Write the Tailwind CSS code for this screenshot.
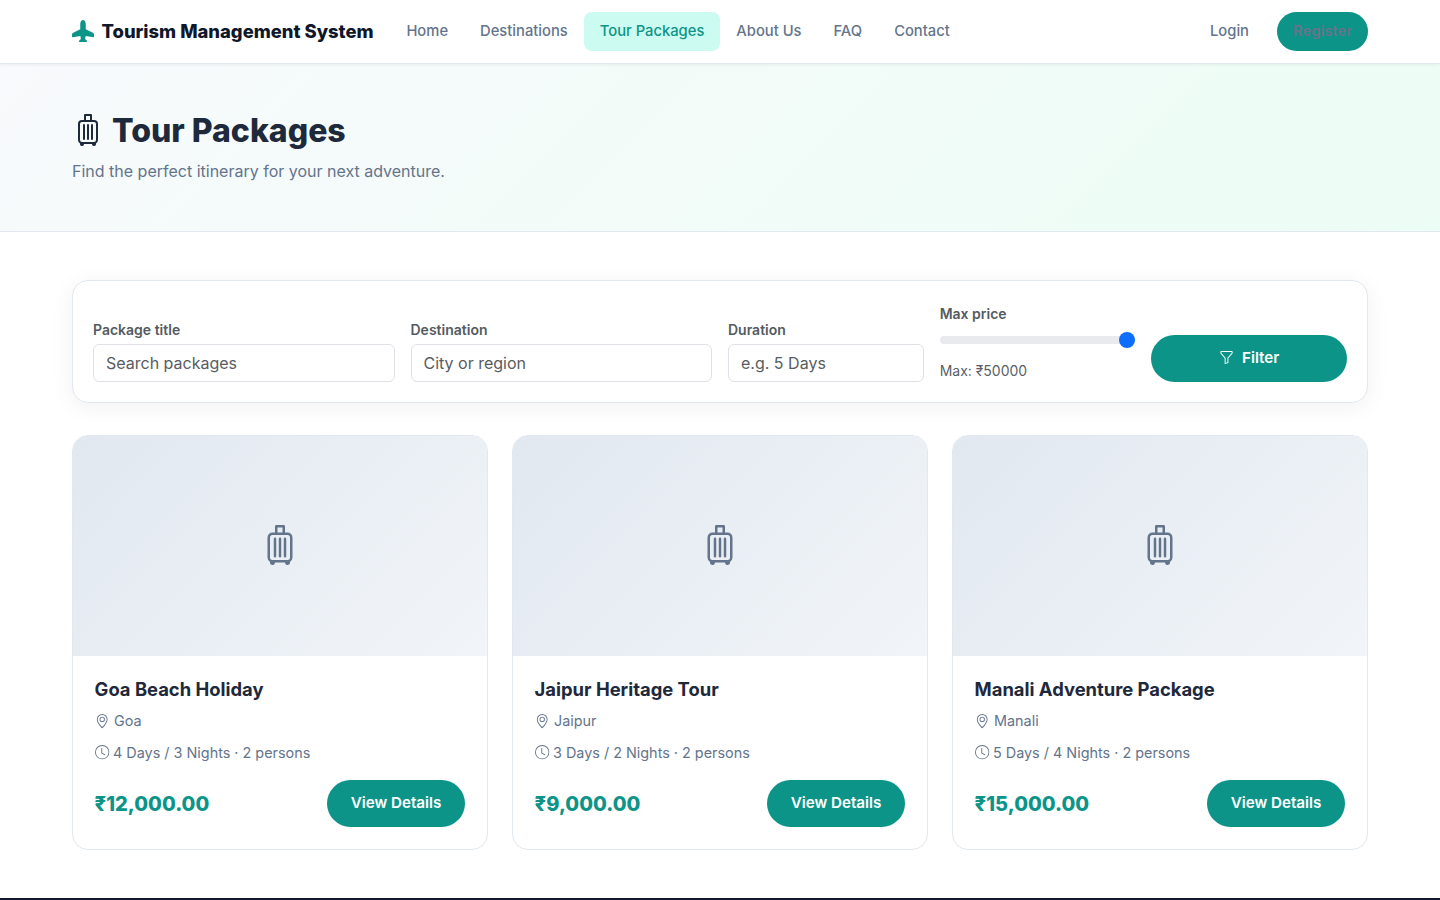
<!DOCTYPE html>
<html lang="en">
<head>
<meta charset="utf-8">
<title>Tour Packages - Tourism Management System</title>
<script src="https://cdn.jsdelivr.net/npm/@tailwindcss/browser@4"></script>
</head>
<body class="h-[900px] overflow-hidden bg-white font-['Inter',sans-serif] text-[#1e293b]">
<svg class="hidden">
  <symbol id="plane" viewBox="0 0 16 16"><path d="M6.428 1.151C6.708.591 7.213 0 8 0s1.292.592 1.572 1.151C9.861 1.73 10 2.431 10 3v3.691l5.17 2.585a1.5 1.5 0 0 1 .83 1.342V12a.5.5 0 0 1-.582.493l-5.507-.918-.375 2.253 1.318 1.318A.5.5 0 0 1 10.5 16h-5a.5.5 0 0 1-.354-.854l1.319-1.318-.376-2.253-5.507.918A.5.5 0 0 1 0 12v-1.382a1.5 1.5 0 0 1 .83-1.342L6 6.691V3c0-.568.14-1.271.428-1.849"/></symbol>
  <symbol id="suitcase" viewBox="0 0 16 16"><path d="M6 5a.5.5 0 0 1 .5.5v7a.5.5 0 0 1-1 0v-7A.5.5 0 0 1 6 5m2 0a.5.5 0 0 1 .5.5v7a.5.5 0 0 1-1 0v-7A.5.5 0 0 1 8 5m2 0a.5.5 0 0 1 .5.5v7a.5.5 0 0 1-1 0v-7A.5.5 0 0 1 10 5"/><path fill-rule="evenodd" d="M6.5 0a.5.5 0 0 0-.5.5V3H5a2 2 0 0 0-2 2v8a2 2 0 0 0 1.031 1.75A1 1 0 1 0 6 15h4a1 1 0 1 0 1.969-.25A2 2 0 0 0 13 13V5a2 2 0 0 0-2-2h-1V.5a.5.5 0 0 0-.5-.5zM9 3V1H7v2zM5 4a1 1 0 0 0-1 1v8a1 1 0 0 0 1 1h6a1 1 0 0 0 1-1V5a1 1 0 0 0-1-1z"/></symbol>
  <symbol id="pin" viewBox="0 0 16 16"><path d="M12.166 8.94c-.524 1.062-1.234 2.12-1.96 3.07A32 32 0 0 1 8 14.58a32 32 0 0 1-2.206-2.57c-.726-.95-1.436-2.008-1.96-3.07C3.304 7.867 3 6.862 3 6a5 5 0 0 1 10 0c0 .862-.305 1.867-.834 2.94M8 16s6-5.686 6-10A6 6 0 0 0 2 6c0 4.314 6 10 6 10"/><path d="M8 8a2 2 0 1 1 0-4 2 2 0 0 1 0 4m0 1a3 3 0 1 0 0-6 3 3 0 0 0 0 6"/></symbol>
  <symbol id="clock" viewBox="0 0 16 16"><path d="M8 3.5a.5.5 0 0 0-1 0V9a.5.5 0 0 0 .252.434l3.5 2a.5.5 0 0 0 .496-.868L8 8.71z"/><path d="M8 16A8 8 0 1 0 8 0a8 8 0 0 0 0 16m7-8A7 7 0 1 1 1 8a7 7 0 0 1 14 0"/></symbol>
  <symbol id="funnel" viewBox="0 0 16 16"><path d="M1.5 1.5A.5.5 0 0 1 2 1h12a.5.5 0 0 1 .5.5v2a.5.5 0 0 1-.128.334L10 8.692V13.5a.5.5 0 0 1-.342.474l-3 1A.5.5 0 0 1 6 14.5V8.692L1.628 3.834A.5.5 0 0 1 1.5 3.5zm1 .5v1.308l4.372 4.858A.5.5 0 0 1 7 8.5v5.306l2-.666V8.5a.5.5 0 0 1 .128-.334L13.5 3.308V2z"/></symbol>
</svg>

<header class="relative z-10 flex h-16 items-start border-b border-[#e2e8f0] bg-white px-[72px] pt-3 shadow-[0_1px_3px_rgba(15,23,42,0.06)]">
  <a class="flex h-[39px] w-[302px] items-center gap-[7.5px] text-[18.4px] font-extrabold text-[#0f172a]"><svg class="mb-0.5 size-[22px] fill-[#0d9488]"><use href="#plane"/></svg><span class="whitespace-nowrap">Tourism Management System</span></a>
  <nav class="ml-[16.4px] flex h-[39px] flex-1 items-stretch text-[14.75px] font-medium whitespace-nowrap text-[#64748b]">
    <a class="flex items-center px-4">Home</a>
    <a class="flex items-center px-4">Destinations</a>
    <a class="flex items-center rounded-lg bg-[#ccfbf1] px-4 text-[#0d9488]">Tour Packages</a>
    <a class="flex items-center px-4">About Us</a>
    <a class="flex items-center px-4">FAQ</a>
    <a class="flex items-center px-4">Contact</a>
    <a class="ml-auto flex items-center px-4">Login</a>
    <a class="ml-3 flex w-[91px] items-center justify-center rounded-full bg-[#0d9488] font-semibold">Register</a>
  </nav>
</header>

<section class="h-[168px] border-b border-[#e2e8f0] bg-linear-135 from-[#f8fafc] to-[#ecfdf5] px-[72px] pt-12">
  <h1 class="flex h-[38px] items-center gap-2 text-[32px] font-extrabold"><svg class="mb-0.5 size-8 fill-current"><use href="#suitcase"/></svg>Tour Packages</h1>
  <p class="mt-2 text-base leading-[26px] text-[#64748b]">Find the perfect itinerary for your next adventure.</p>
</section>

<main class="px-[72px] pt-12">
  <form class="grid h-[123px] grid-cols-12 items-end gap-4 rounded-2xl border border-[#e2e8f0] bg-white p-5 shadow-[0_4px_24px_rgba(15,23,42,0.06)]">
    <div class="col-span-3">
      <label class="block text-sm leading-[22px] font-semibold text-[#555b61]">Package title</label>
      <div class="mt-[3px] flex h-[38px] items-center rounded-md border border-[#dee2e6] px-3 text-base text-[#595c5f]">Search packages</div>
    </div>
    <div class="col-span-3">
      <label class="block text-sm leading-[22px] font-semibold text-[#555b61]">Destination</label>
      <div class="mt-[3px] flex h-[38px] items-center rounded-md border border-[#dee2e6] px-3 text-base text-[#595c5f]">City or region</div>
    </div>
    <div class="col-span-2">
      <label class="block text-sm leading-[22px] font-semibold text-[#555b61]">Duration</label>
      <div class="mt-[3px] flex h-[38px] items-center rounded-md border border-[#dee2e6] px-3 text-base text-[#595c5f]">e.g. 5 Days</div>
    </div>
    <div class="col-span-2">
      <label class="block text-sm leading-[22px] font-semibold text-[#555b61]">Max price</label>
      <div class="mt-[7px] flex h-4 items-center"><div class="h-2 flex-1 rounded-full bg-[#e9eaee]"></div><div class="-ml-4 size-4 rounded-full bg-[#0d6efd]"></div></div>
      <div class="mt-3 text-sm leading-[22px] text-[#5a6168]">Max: ₹50000</div>
    </div>
    <button class="col-span-2 flex h-[47px] items-center justify-center gap-2 rounded-full bg-[#0d9488] text-[15.2px] font-semibold text-white"><svg class="mb-0.5 size-[15px] fill-current"><use href="#funnel"/></svg>Filter</button>
  </form>

  <div id="packages" class="mt-8 grid grid-cols-3 gap-6"></div>
</main>
<footer class="mt-12 h-10 bg-[#0f172a]"></footer>

<template id="card">
  <article class="h-[415px] overflow-hidden rounded-2xl border border-[#e2e8f0] bg-white">
    <div class="flex h-[220px] items-center justify-center bg-linear-135 from-[#e2e8f0] to-[#f1f5f9]"><svg class="mb-0.5 size-10 fill-[#64748b]"><use href="#suitcase"/></svg></div>
    <div class="pt-[22px] pr-[22px] pl-[21.6px]">
      <h2 data-f="title" class="text-[18.4px] leading-[22px] font-bold"></h2>
      <div class="mt-[9px] flex h-6 items-center text-[14.4px] text-[#64748b]"><svg class="mr-[5px] size-[14.4px] overflow-visible fill-current"><use href="#pin" class="overflow-visible"/></svg><span data-f="place"></span></div>
      <div class="mt-2 flex h-6 items-center text-[14.4px] text-[#64748b]"><svg class="mr-1 mb-px size-[14.4px] overflow-visible fill-current"><use href="#clock" class="overflow-visible"/></svg><span data-f="time"></span></div>
      <div class="mt-[15px] flex items-center justify-between">
        <span data-f="price" class="text-xl font-extrabold text-[#0d9488]"></span>
        <button class="h-[47px] w-[138px] rounded-full bg-[#0d9488] text-[15.2px] font-semibold text-white">View Details</button>
      </div>
    </div>
  </article>
</template>
<script>
const packages = [
  { title: "Goa Beach Holiday", place: "Goa", time: "4 Days / 3 Nights · 2 persons", price: "₹12,000.00" },
  { title: "Jaipur Heritage Tour", place: "Jaipur", time: "3 Days / 2 Nights · 2 persons", price: "₹9,000.00" },
  { title: "Manali Adventure Package", place: "Manali", time: "5 Days / 4 Nights · 2 persons", price: "₹15,000.00" }
];
for (const item of packages) {
  const card = document.getElementById("card").content.cloneNode(true);
  card.querySelectorAll("[data-f]").forEach(el => el.textContent = item[el.dataset.f]);
  document.getElementById("packages").append(card);
}
</script>
</body>
</html>
